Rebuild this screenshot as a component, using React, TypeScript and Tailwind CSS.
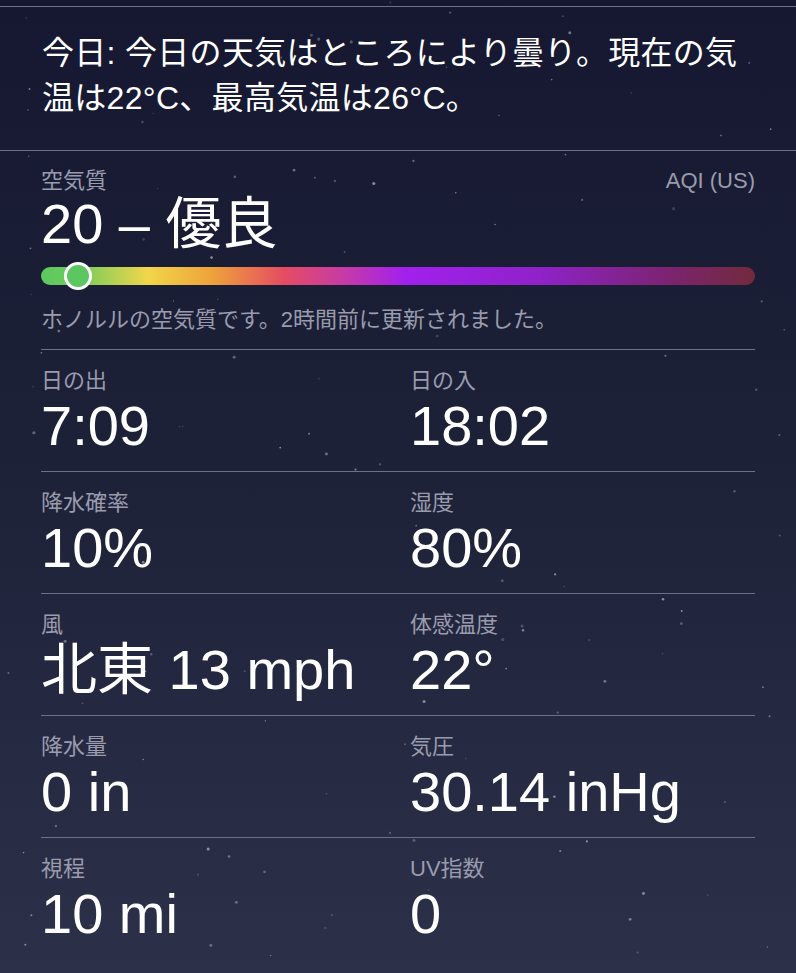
const FONT = { fontFamily: '"Liberation Sans", "Noto Sans CJK JP", sans-serif' }

const rows: [string, string, string, string][] = [
  ['日の出', '7:09', '日の入', '18:02'],
  ['降水確率', '10%', '湿度', '80%'],
  ['風', '北東 13 mph', '体感温度', '22°'],
  ['降水量', '0 in', '気圧', '30.14 inHg'],
  ['視程', '10 mi', 'UV指数', '0'],
]

// fixed pseudo-random star field
function stars() {
  const out: { x: number; y: number; r: number; o: number }[] = []
  let s = 17
  const rnd = () => {
    s = (s * 9301 + 49297) % 233280
    return s / 233280
  }
  for (let i = 0; i < 130; i++) {
    out.push({ x: rnd() * 796, y: rnd() * 973, r: 0.6 + rnd() * 1.0, o: 0.12 + rnd() * 0.38 })
  }
  return out
}

function Label({ children }: { children: React.ReactNode }) {
  return <div className="text-[22px] leading-[26px] text-[#9a9cad]">{children}</div>
}

function Value({ children }: { children: React.ReactNode }) {
  return <div className="text-[56px] leading-[56px] text-white mt-[4px] whitespace-nowrap">{children}</div>
}

export default function App() {
  const dots = stars()
  return (
    <div
      className="relative w-[796px] h-[973px] overflow-hidden bg-gradient-to-b from-[#151830] via-[#1e2239] to-[#2c3049]"
      style={FONT}
    >
      <svg className="absolute inset-0 pointer-events-none" width="796" height="973">
        {dots.map((d, i) => (
          <circle key={i} cx={d.x} cy={d.y} r={d.r} fill="#ffffff" opacity={d.o} />
        ))}
      </svg>

      <div className="relative">
        {/* Summary */}
        <div className="h-[6px]" />
        <div className="h-px bg-[#6d7089]" />
        <div className="px-[42px] pt-[24px] pb-[29px] text-[32px] leading-[45px] tracking-[0.3px] text-white">
          今日: 今日の天気はところにより曇り。現在の気温は22°C、最高気温は26°C。
        </div>
        <div className="h-px bg-[#6d7089]" />

        <div className="px-[41px]">
          {/* Air quality */}
          <div className="pt-[17px] pb-[16px]">
            <div className="flex justify-between">
              <Label>空気質</Label>
              <Label>AQI (US)</Label>
            </div>
            <div className="text-[56px] leading-[56px] text-white mt-[2px]">20 – 優良</div>
            <div className="relative mt-[15px] h-[18px] rounded-full bg-[linear-gradient(90deg,#5cc860_0%,#6fcb5c_5%,#f2d64a_15%,#eea23a_24%,#e54c62_34%,#c83ca2_42%,#a220ee_51%,#8f22c8_70%,#7b2470_88%,#722a3c_100%)]">
              <div className="absolute left-[23px] top-[-5px] w-[28px] h-[28px] rounded-full border-[3px] border-white bg-[#5cc660]" />
            </div>
            <div className="mt-[22px] text-[22px] leading-[26px] text-[#9a9cad]">
              ホノルルの空気質です。2時間前に更新されました。
            </div>
          </div>

          {rows.map((r, i) => (
            <div key={i}>
              <div className="h-px bg-[#6d7089]" />
              <div className="grid grid-cols-2 gap-x-6 pt-[18px] pb-[17px]">
                <div>
                  <Label>{r[0]}</Label>
                  <Value>{r[1]}</Value>
                </div>
                <div>
                  <Label>{r[2]}</Label>
                  <Value>{r[3]}</Value>
                </div>
              </div>
            </div>
          ))}
        </div>
      </div>
    </div>
  )
}
